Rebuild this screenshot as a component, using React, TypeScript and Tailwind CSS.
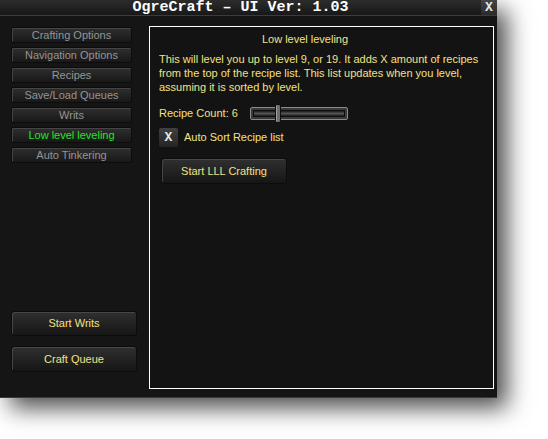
const navItems = [
  "Crafting Options",
  "Navigation Options",
  "Recipes",
  "Save/Load Queues",
  "Writs",
  "Low level leveling",
  "Auto Tinkering",
];

const NavButton = ({ label, active }: { label: string; active?: boolean }) => (
  <div
    className={`h-[16px] w-[121px] flex items-center justify-center rounded-[2px] border border-[#0c0c0c] bg-gradient-to-b from-[#2f2f2f] to-[#181818] shadow-[inset_1px_1px_0_#454545] text-[11px] leading-none ${
      active ? "text-[#22e622]" : "text-[#959595]"
    }`}
  >
    {label}
  </div>
);

const BigButton = ({ label, className = "" }: { label: string; className?: string }) => (
  <div
    className={`w-[126px] flex items-center justify-center rounded-[3px] border border-[#0c0c0c] bg-gradient-to-b from-[#303030] to-[#161616] shadow-[inset_1px_1px_0_#474747] text-[11px] text-[#f3e183] ${className}`}
  >
    {label}
  </div>
);

const App = () => {
  return (
    <div
      className="w-[548px] h-[439px] bg-white"
      style={{ fontFamily: '"Liberation Sans", Arial, sans-serif' }}
    >
      <div className="w-[497px] h-[398px] flex flex-col bg-[#151515] border-b border-[#3a3a3a] shadow-[10px_10px_22px_rgba(0,0,0,0.7)]">
        {/* title bar */}
        <div className="h-[16px] flex border-b border-[#3c3c3c] bg-gradient-to-b from-[#2c2c2c] to-[#181818]">
          <div
            className="flex-1 text-center text-white font-bold text-[15px] leading-[15px]"
            style={{ fontFamily: '"Liberation Mono", "DejaVu Sans Mono", monospace' }}
          >
            OgreCraft – UI Ver: 1.03
          </div>
          <div
            className="w-[16px] h-[15px] flex items-center justify-center bg-gradient-to-b from-[#454545] to-[#2a2a2a] text-[#e8e8e8] font-bold text-[13px] leading-none"
            style={{ fontFamily: '"Liberation Mono", monospace' }}
          >
            X
          </div>
        </div>

        {/* body */}
        <div className="flex-1 flex pl-[11px] pr-[3px] pt-[10px] pb-[8px] gap-[12px]">
          <div className="w-[126px] flex flex-col justify-between pt-[1px] pb-[17px]">
            <div className="flex flex-col gap-[4px]">
              {navItems.map((n) => (
                <NavButton key={n} label={n} active={n === "Low level leveling"} />
              ))}
            </div>
            <div className="flex flex-col gap-[10px]">
              <BigButton label="Start Writs" className="h-[25px]" />
              <BigButton label="Craft Queue" className="h-[26px]" />
            </div>
          </div>

          <div className="w-[345px] border border-white bg-[#131313] pl-[9px] pt-[5px] text-[#f3e183] text-[11px]">
            <div className="pr-[42px] text-center leading-[14px]">Low level leveling</div>
            <div className="mt-[6px] leading-[14px] whitespace-nowrap">
              This will level you up to level 9, or 19. It adds X amount of recipes
              <br />
              from the top of the recipe list. This list updates when you level,
              <br />
              assuming it is sorted by level.
            </div>

            <div className="mt-[9px] flex items-center h-[20px]">
              <span className="w-[91px]">Recipe Count: 6</span>
              <div className="relative w-[98px] h-[13px] rounded-[2px] border border-[#8a8a8a] bg-[#3a3a3a] flex items-center px-[2px]">
                <div className="h-[7px] w-full border border-[#0e0e0e] bg-gradient-to-b from-[#1a1a1a] via-[#555] to-[#1a1a1a]" />
                <div className="absolute left-[24px] top-[-4px] w-[6px] h-[19px] rounded-[2px] border border-[#0e0e0e] bg-[#6e6e6e] shadow-[inset_1px_0_0_#a0a0a0]" />
              </div>
            </div>

            <div className="mt-[5px] flex items-center">
              <div
                className="w-[19px] h-[19px] flex items-center justify-center rounded-[2px] bg-gradient-to-b from-[#404040] to-[#252525] text-[#e8e8e8] font-bold text-[13px] leading-none"
                style={{ fontFamily: '"Liberation Mono", monospace' }}
              >
                X
              </div>
              <span className="ml-[6px]">Auto Sort Recipe list</span>
            </div>

            <BigButton label="Start LLL Crafting" className="mt-[11px] ml-[2px] h-[26px]" />
          </div>
        </div>
      </div>
    </div>
  );
};

export default App;
